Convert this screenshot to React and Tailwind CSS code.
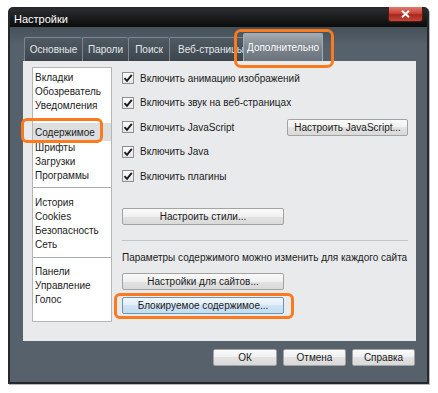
import React from 'react';

const LIST = [
  ['Вкладки', 'Обозреватель', 'Уведомления', 'Содержимое', 'Шрифты', 'Загрузки', 'Программы'],
  ['История', 'Cookies', 'Безопасность', 'Сеть'],
  ['Панели', 'Управление', 'Голос'],
];

const CHECKS = [
  'Включить анимацию изображений',
  'Включить звук на веб-страницах',
  'Включить JavaScript',
  'Включить Java',
  'Включить плагины',
];

function Btn({ children, className = '', focused }) {
  const skin = focused
    ? 'border-[#6f93b3] bg-[linear-gradient(#f1f8fd,#e0eef9_50%,#cfe4f4_50%,#c3ddf1)]'
    : 'border-[#a3a3a3] bg-[linear-gradient(#fafafa,#f0f0f0_50%,#e3e3e3_50%,#d9d9d9)]';
  return (
    <div className={`flex h-[17px] items-center justify-center rounded-[2px] border text-[10px] text-[#1b1b1b] ${skin} ${className}`}>
      {children}
    </div>
  );
}

function Check({ label }) {
  return (
    <div className="flex items-center gap-[6px]">
      <span className="grid size-[12px] place-items-center border border-[#8e8f8f] bg-[linear-gradient(#ffffff,#e6e6e6)]">
        <svg width="10" height="10" viewBox="0 0 10 10">
          <path d="M1.5 5.2 L4 7.8 L8.8 1.8" fill="none" stroke="#1a1a1a" strokeWidth="1.9" />
        </svg>
      </span>
      <span className="text-[10px] text-[#1b1b1b]">{label}</span>
    </div>
  );
}

export default function App() {
  return (
    <div className="relative h-[393px] w-[438px] overflow-hidden bg-white pl-[8px] pt-[7px] font-['Liberation_Sans',Arial,sans-serif]">
      {/* window */}
      <div className="flex h-[377px] w-[421px] flex-col rounded-t-[5px] border-2 border-[#25292d] bg-[linear-gradient(#353e46,#56616b_36px,#56616b)] shadow-[1px_1px_0_#b9b9b9]">
        {/* title bar */}
        <div className="flex h-[18px] items-start justify-between bg-[linear-gradient(#2a2c2e,#0b0b0b)] pl-[4px] pr-[4px]">
          <span className="pt-[4px] text-[11px] leading-[13px] text-white">Настройки</span>
          <span className="-mt-[2px] grid h-[15px] w-[35px] place-items-center rounded-b-[3px] border border-t-0 border-[#5a1712] bg-[linear-gradient(#e07a6d,#c8453a_45%,#a9261c_55%,#bf4a3c)]">
            <svg width="9" height="8" viewBox="0 0 9 8">
              <path d="M1 0.8 L8 7.2 M8 0.8 L1 7.2" stroke="#ffffff" strokeWidth="2" />
            </svg>
          </span>
        </div>

        {/* tabs */}
        <div className="flex h-[34px] items-end pl-[14px]">
          <Tab w="w-[58px]">Основные</Tab>
          <Tab w="w-[46px]">Пароли</Tab>
          <Tab w="w-[41px]">Поиск</Tab>
          <div className="flex h-[24px] w-[76px] items-center overflow-hidden whitespace-nowrap rounded-t-[2px] border border-b-0 border-[#7d868e] bg-[linear-gradient(#505a63,#3d464e)] pl-[8px] text-[10px] text-[#e4e8eb]">
            Веб-страницы
          </div>
          <div className="-ml-[2px] flex h-[28px] w-[80px] items-center justify-center rounded-t-[2px] border border-b-0 border-[#a5adb4] bg-[linear-gradient(#a3aab1,#7c858d_50%,#6b747c)] text-[10px] text-white">
            Дополнительно
          </div>
        </div>

        {/* panel */}
        <div className="ml-[13px] flex h-[280px] w-[393px] bg-[#e9eaeb]">
          <div className="ml-[9px] mt-[6px] h-[255px] w-[80px] border border-[#b3b5b7] bg-white pt-[3px] text-[10px] text-[#1b1b1b]">
            {LIST.map((group, gi) => (
              <div
                key={gi}
                className={gi === 1 ? 'mt-[5px] border-t border-[#a9acaf] pt-[8px]' : gi === 2 ? 'mt-[6px] border-t border-[#a9acaf] pt-[7px]' : ''}
              >
                {group.map((item) => (
                  <div
                    key={item}
                    className={
                      item === 'Содержимое'
                        ? 'mt-[11px] flex h-[18px] items-center bg-[#dcdee0] pl-[2px]'
                        : 'flex h-[13.7px] items-center pl-[2px]'
                    }
                  >
                    {item}
                  </div>
                ))}
              </div>
            ))}
          </div>

          <div className="ml-[10px] w-[286px] pt-[5px]">
            {CHECKS.map((c) => (
              <div key={c} className="flex h-[24.5px] items-center justify-between">
                <Check label={c} />
                {c === 'Включить JavaScript' && <Btn className="w-[121px]">Настроить JavaScript...</Btn>}
              </div>
            ))}
            <Btn className="mt-[19px] w-[162px]">Настроить стили...</Btn>
            <div className="mt-[15px] h-[2px] w-[286px] border-t border-[#c4c6c8] border-b-white" />
            <div className="mt-[10px] text-[10px] leading-[12px] text-[#1b1b1b]">
              Параметры содержимого можно изменить для каждого сайта
            </div>
            <Btn className="mt-[9px] w-[162px]">Настройки для сайтов...</Btn>
            <Btn focused className="mt-[7px] w-[162px]">Блокируемое содержимое...</Btn>
          </div>
        </div>

        {/* dialog buttons */}
        <div className="mt-[8px] flex justify-end gap-[6px] pr-[12px]">
          <Btn className="w-[64px]">ОК</Btn>
          <Btn className="w-[63px]">Отмена</Btn>
          <Btn className="w-[63px]">Справка</Btn>
        </div>
      </div>

      {/* orange annotations */}
      <div className="absolute left-[234px] top-[29px] h-[39px] w-[100px] rounded-[7px] border-[3px] border-[#fb7a1e]" />
      <div className="absolute left-[21px] top-[118px] h-[25px] w-[82px] rounded-[6px] border-[3px] border-[#fb7a1e]" />
      <div className="absolute left-[114px] top-[293px] h-[26px] w-[180px] rounded-[6px] border-[3px] border-[#fb7a1e]" />
    </div>
  );
}

function Tab({ w, children }) {
  return (
    <div className={`flex h-[24px] items-center justify-center rounded-t-[2px] border border-b-0 border-r-0 border-[#7d868e] bg-[linear-gradient(#505a63,#3d464e)] text-[10px] text-[#e4e8eb] ${w}`}>
      {children}
    </div>
  );
}
